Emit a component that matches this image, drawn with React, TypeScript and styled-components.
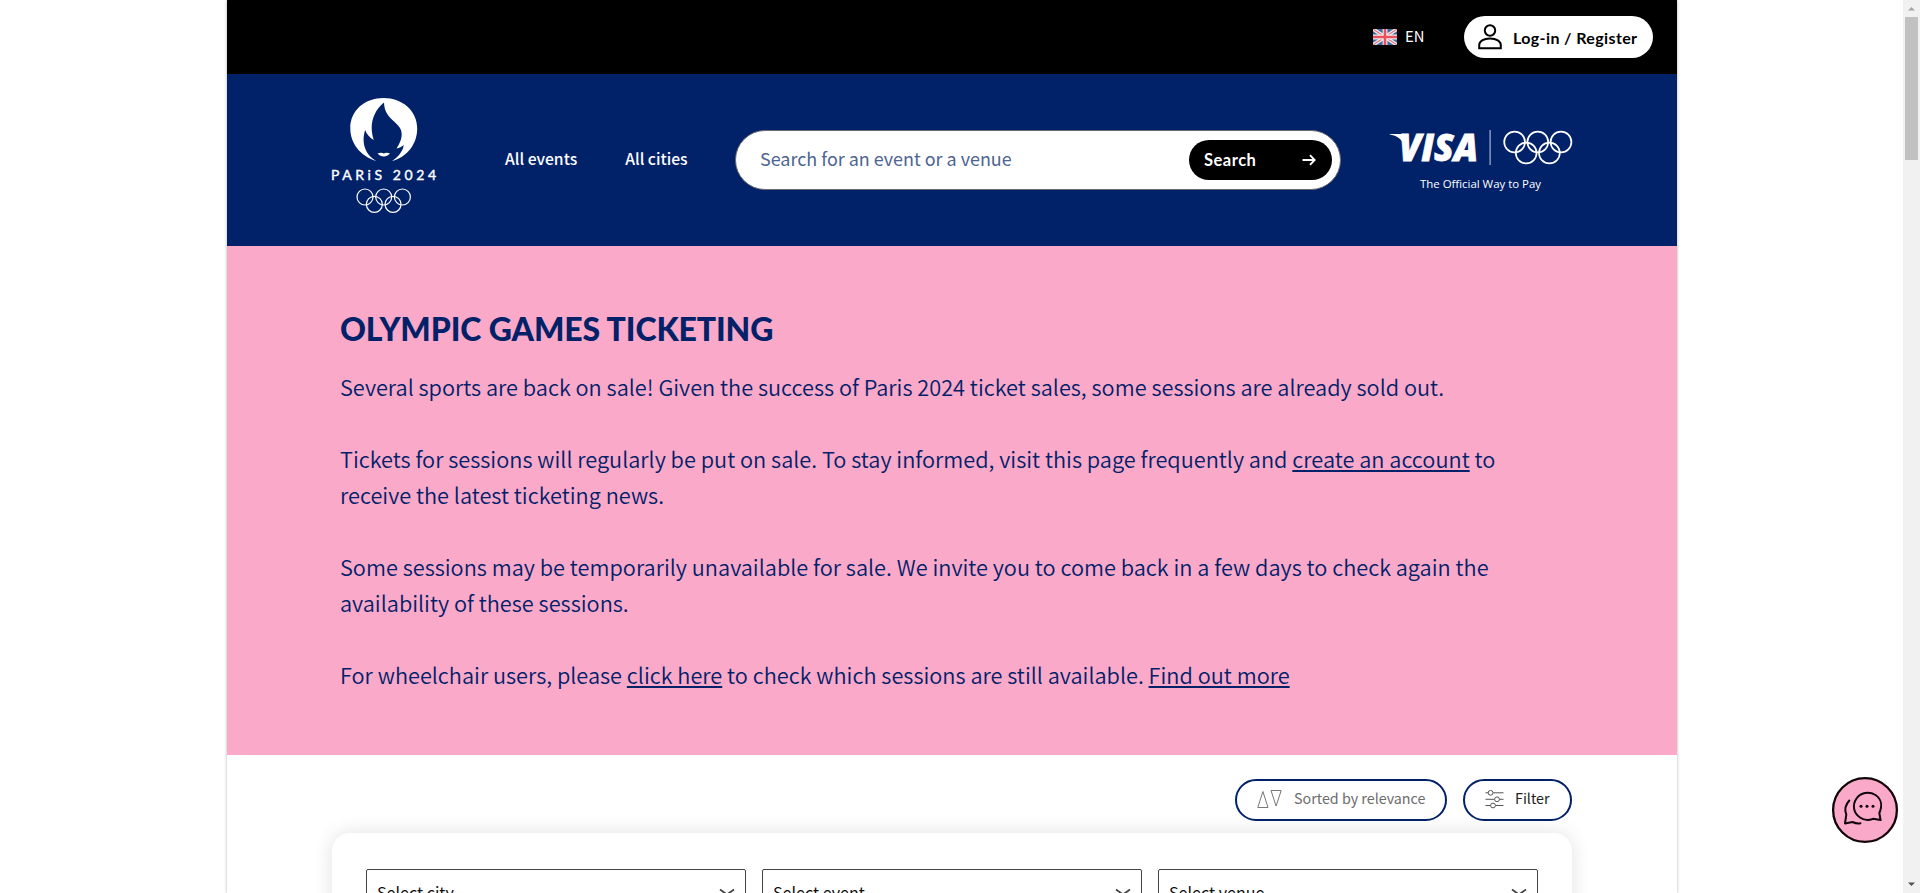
import React from "react";
import styled, { createGlobalStyle } from "styled-components";

const NAVY = "#012169";
const PINK = "#faa9c9";
const SANS = '"Noto Sans CJK JP", "Noto Sans", sans-serif';
const DISPLAY = 'Lato, "Open Sans", sans-serif';

const GlobalStyle = createGlobalStyle`
  * { box-sizing: border-box; }
  html, body { margin: 0; padding: 0; height: 893px; overflow: hidden; background: #fff; }
  body { font-family: ${SANS}; color: #000; }
  a { color: inherit; }
  svg { display: block; flex: none; overflow: visible; }
`;

const Viewport = styled.div`
  display: flex;
  width: 1920px;
  height: 893px;
  overflow: hidden;
`;

const Stage = styled.div`
  flex: 1;
  padding-left: 227px;
`;

const Page = styled.div`
  width: 1450px;
  height: 893px;
  overflow: hidden;
  background: #fff;
  box-shadow: 0 0 3px rgba(0, 0, 0, 0.3);
`;

const TopBar = styled.div`
  display: flex;
  justify-content: flex-end;
  align-items: center;
  height: 74px;
  padding-right: 24px;
  background: #000;
`;

const Language = styled.button`
  display: flex;
  align-items: center;
  gap: 8px;
  width: 91px;
  padding: 0;
  border: 0;
  background: none;
  color: #fff;
  font: 400 14.8px/20px ${SANS};
`;

const LanguageCode = styled.span`
  padding-bottom: 2px;
`;

const LoginButton = styled.button`
  display: flex;
  align-items: center;
  width: 189px;
  height: 42px;
  padding: 0 0 0 13px;
  gap: 10px;
  border: 0;
  border-radius: 21px;
  background: #fff;
  color: #000;
  font: 700 16px/20px ${DISPLAY};
  letter-spacing: 0.38px;
  white-space: nowrap;
`;

const LoginLabel = styled.span`
  padding-top: 2px;
`;

const Header = styled.header`
  display: flex;
  align-items: center;
  height: 172px;
  padding-left: 103px;
  background: ${NAVY};
`;

const Brand = styled.div`
  padding-bottom: 8px;
`;

const Nav = styled.nav`
  display: flex;
  width: 230px;
  margin-left: 67px;
  padding-bottom: 3px;
  gap: 48px;
`;

const NavLink = styled.a`
  color: #fff;
  font: 500 15.7px/24px ${SANS};
  text-decoration: none;
  white-space: nowrap;
`;

const SearchBox = styled.form`
  display: flex;
  align-items: center;
  justify-content: space-between;
  width: 606px;
  height: 60px;
  padding: 0 8px 0 24px;
  border: 1px solid #6b6b6b;
  border-radius: 30px;
  background: #fff;
`;

const Placeholder = styled.span`
  padding-bottom: 4px;
  color: #4d6491;
  font: 400 17.95px/26px ${SANS};
  white-space: nowrap;
`;

const SearchButton = styled.button`
  display: flex;
  align-items: center;
  justify-content: space-between;
  width: 143px;
  height: 40px;
  padding: 0 16px 0 15px;
  border: 0;
  border-radius: 20px;
  background: #000;
  color: #fff;
  font: 700 16.5px/20px ${DISPLAY};
  letter-spacing: 0.5px;
`;

const Partner = styled.div`
  margin-left: 48px;
  padding-bottom: 1px;
`;

const Hero = styled.section`
  height: 509px;
  padding: 64px 113px 0;
  background: ${PINK};
  color: ${NAVY};
`;

const Title = styled.h1`
  margin: 0;
  font: 900 32px/37px ${DISPLAY};
  letter-spacing: -0.1px;
  white-space: nowrap;
`;

const Paragraph = styled.p`
  margin: 0 0 36px;
  font: 350 21.73px/36px ${SANS};
  white-space: nowrap;
`;

const Copy = styled.div`
  padding-top: 22px;
`;

const TextLink = styled.a`
  text-decoration: underline;
  text-decoration-thickness: 2px;
  text-underline-offset: 2px;
  text-decoration-skip-ink: none;
`;

const Actions = styled.div`
  display: flex;
  justify-content: flex-end;
  gap: 16px;
  padding: 24px 105px 12px 0;
`;

const PillButton = styled.button<{ $width: number; $gap: number; $muted?: boolean }>`
  display: flex;
  align-items: center;
  gap: ${(p) => p.$gap}px;
  width: ${(p) => p.$width}px;
  height: 42px;
  padding: 0 0 2px 20px;
  border: 2px solid ${NAVY};
  border-radius: 21px;
  background: #fff;
  color: ${(p) => (p.$muted ? "#6c6c6c" : "#222")};
  font: 400 14.3px/20px ${SANS};
  white-space: nowrap;
`;

const PillLabel = styled.span`
  padding-bottom: 2px;
`;

const FilterCard = styled.section`
  display: flex;
  gap: 16px;
  width: 1240px;
  height: 200px;
  margin-left: 105px;
  padding: 36px 34px;
  border-radius: 18px;
  background: #fff;
  box-shadow: 0 0 20px rgba(0, 0, 0, 0.12);
`;

const Select = styled.div`
  display: flex;
  align-items: center;
  justify-content: space-between;
  flex: 1;
  height: 45px;
  padding: 0 10px;
  border: 1px solid #444;
  border-radius: 2px;
  font: 400 16.1px/24px ${SANS};
  color: #111;
`;

const ScrollTrack = styled.div`
  display: flex;
  flex-direction: column;
  align-items: center;
  width: 17px;
  height: 893px;
  background: #f1f1f1;
`;

const ScrollThumb = styled.div`
  width: 13px;
  height: 143px;
  margin-bottom: auto;
  background: #c1c1c1;
`;

const ChatButton = styled.button`
  position: fixed;
  right: 22px;
  bottom: 50px;
  width: 66px;
  height: 66px;
  padding: 0;
  border: 0;
  background: none;
`;

type RingsProps = { cx: number; cy: number; r: number; dx: number; dy: number; w: number };

const Rings = ({ cx, cy, r, dx, dy, w }: RingsProps) => (
  <g fill="none" stroke="#fff" strokeWidth={w}>
    <circle cx={cx - dx} cy={cy} r={r} />
    <circle cx={cx} cy={cy} r={r} />
    <circle cx={cx + dx} cy={cy} r={r} />
    <circle cx={cx - dx / 2} cy={cy + dy} r={r} />
    <circle cx={cx + dx / 2} cy={cy + dy} r={r} />
  </g>
);

const ParisLogo = () => (
  <svg width="108" height="120" viewBox="0 0 108 120">
    <path
      fill="#fff"
      d="M46.3 65 C30 60 20.3 47 20.3 32.5 C20.3 14 35 2 53.7 2 C72 2 87.2 14.5 87.2 32.5 C87.2 47 78 61 62 65 C68 61 73 55.5 73.7 49 C71.5 51 69.5 52 66.5 52.5 C71.5 45 73 38.5 70.5 33 C67 25 54.5 22.5 54 6.5 C46 13 41.7 22 41.7 32 C41.7 36 42.5 40 43.7 44 C39.5 41.5 36.5 38 35.2 34 C31.5 45 34 58 46.3 65 Z"
    />
    <path fill="#fff" d="M47.5 57.5 C50 56.5 52.3 56.6 53.8 57.4 C55.3 56.6 57.7 56.5 60 57.5 C56.5 61.5 51 61.5 47.5 57.5 Z" />
    <text
      x="1"
      y="84"
      textLength="105"
      lengthAdjust="spacing"
      fill="#fff"
      stroke="#fff"
      strokeWidth="0.4"
      fontFamily={DISPLAY}
      fontSize="14"
      fontWeight="400"
    >
      PARiS 2024
    </text>
    <Rings cx={53.7} cy={101} r={8} dx={18.7} dy={7.3} w={1.2} />
  </svg>
);

const VisaLogo = () => (
  <svg width="190" height="66" viewBox="0 0 190 66">
    <path fill="#fff" d="M0.8 7 H15.5 L18 13 L14 16 C11 11 7 8.5 0.8 7.6 Z" />
    <text
      x="10"
      y="34"
      textLength="79"
      lengthAdjust="spacingAndGlyphs"
      fill="#fff"
      stroke="#fff"
      strokeWidth="0.8"
      fontFamily='"Open Sans", sans-serif'
      fontStyle="italic"
      fontWeight="800"
      fontSize="37"
    >
      VISA
    </text>
    <rect x="100.5" y="3" width="1.2" height="35" fill="#aab6d2" />
    <Rings cx={148.8} cy={15} r={10.4} dx={23.2} dy={11} w={1.7} />
    <text
      x="31"
      y="61"
      textLength="121"
      lengthAdjust="spacingAndGlyphs"
      fill="#fff"
      fontFamily='"Open Sans", sans-serif'
      fontSize="11.5"
    >
      The Official Way to Pay
    </text>
  </svg>
);

const Flag = () => (
  <svg width="24" height="16" viewBox="0 0 24 16">
    <defs>
      <clipPath id="flag-bounds">
        <rect width="24" height="16" />
      </clipPath>
    </defs>
    <g clipPath="url(#flag-bounds)">
      <rect width="24" height="16" fill="#3f6a9c" />
      <path d="M0 0 L24 16 M24 0 L0 16" stroke="#f3eef0" strokeWidth="3.6" />
      <path d="M0 0 L24 16 M24 0 L0 16" stroke="#e0707c" strokeWidth="1.1" />
      <path d="M12 0 V16 M0 8 H24" stroke="#f3eef0" strokeWidth="4.8" />
      <path d="M12 0 V16 M0 8 H24" stroke="#e8505c" strokeWidth="2.6" />
    </g>
  </svg>
);

const UserIcon = () => (
  <svg width="26" height="28" viewBox="0 0 26 28" fill="none" stroke="#000" strokeWidth="2">
    <circle cx="13" cy="7.5" r="5.2" />
    <path d="M2.2 25.3 V22 C2.2 18.3 6.5 15.5 13 15.5 C19.5 15.5 23.8 18.3 23.8 22 V25.3 Z" />
  </svg>
);

const ArrowIcon = () => (
  <svg width="14" height="12" viewBox="0 0 14 12" fill="none" stroke="#fff" strokeWidth="1.8">
    <path d="M0.5 6 H12.5 M8 1.2 L12.7 6 L8 10.8" />
  </svg>
);

const SortIcon = () => (
  <svg width="25" height="20" viewBox="0 0 25 20" fill="none" stroke="#777" strokeWidth="1">
    <path d="M0.8 18.5 H11 L5.9 2.5 Z M14 1.5 H24.2 L19.1 17 Z" />
  </svg>
);

const SlidersIcon = () => (
  <svg width="20" height="20" viewBox="0 0 20 20" fill="none" stroke="#555" strokeWidth="1">
    <path d="M0.5 3.8 H3.1 M8.1 3.8 H18.5 M0.5 10.3 H9.5 M14.5 10.3 H18.5 M0.5 16.5 H5.5 M10.5 16.5 H18.5" />
    <circle cx="5.6" cy="3.8" r="2.4" />
    <circle cx="12" cy="10.3" r="2.4" />
    <circle cx="8" cy="16.5" r="2.4" />
  </svg>
);

const Chevron = () => (
  <svg width="16" height="10" viewBox="0 0 16 10" fill="none" stroke="#444" strokeWidth="1.8">
    <path d="M1 2.5 L8 7.5 L15 2.5" />
  </svg>
);

const ChatIcon = () => (
  <svg
    width="66"
    height="66"
    viewBox="0 0 66 66"
    fill="none"
    stroke="#120509"
    strokeWidth="2"
    strokeLinecap="round"
    strokeLinejoin="round"
  >
    <circle cx="33" cy="33" r="31.9" fill={PINK} strokeWidth="2.3" />
    <path d="M48.6 43 L47.3 36 C50.5 29 49.5 22 43.5 18 C37 14 28.5 15.5 24.5 21.5 C20 28 21.5 36.5 28 40.5 C32 43.3 37 43.5 41 41.8 Z" />
    <path d="M17.3 23.5 C13.3 28 12.6 33.5 14.3 37.5 L13 46.5 L20.5 45 C23.5 46.5 26 46.8 28.5 46.3" />
    <g fill="#120509" stroke="none">
      <circle cx="29" cy="29.2" r="1.5" />
      <circle cx="35" cy="29.2" r="1.5" />
      <circle cx="41" cy="29.2" r="1.5" />
    </g>
  </svg>
);

const ScrollArrow = ({ down }: { down?: boolean }) => (
  <svg width="17" height="17" viewBox="0 0 17 17">
    <path d={down ? "M5 6.5 H12 L8.5 10 Z" : "M5 10.5 H12 L8.5 7 Z"} fill={down ? "#505050" : "#a3a3a3"} />
  </svg>
);

const selects = ["Select city", "Select event", "Select venue"];

export default function App() {
  return (
    <>
      <GlobalStyle />
      <Viewport>
        <Stage>
          <Page>
            <TopBar>
              <Language>
                <Flag />
                <LanguageCode>EN</LanguageCode>
              </Language>
              <LoginButton>
                <UserIcon />
                <LoginLabel>Log-in / Register</LoginLabel>
              </LoginButton>
            </TopBar>
            <Header>
              <Brand>
                <ParisLogo />
              </Brand>
              <Nav>
                <NavLink>All events</NavLink>
                <NavLink>All cities</NavLink>
              </Nav>
              <SearchBox>
                <Placeholder>Search for an event or a venue</Placeholder>
                <SearchButton type="button">
                  Search
                  <ArrowIcon />
                </SearchButton>
              </SearchBox>
              <Partner>
                <VisaLogo />
              </Partner>
            </Header>
            <Hero>
              <Title>OLYMPIC GAMES TICKETING</Title>
              <Copy>
                <Paragraph>
                  Several sports are back on sale! Given the success of Paris 2024 ticket sales, some sessions are already sold out.
                </Paragraph>
                <Paragraph>
                  Tickets for sessions will regularly be put on sale. To stay informed, visit this page frequently and{" "}
                  <TextLink>create an account</TextLink> to
                  <br />
                  receive the latest ticketing news.
                </Paragraph>
                <Paragraph>
                  Some sessions may be temporarily unavailable for sale. We invite you to come back in a few days to check again the
                  <br />
                  availability of these sessions.
                </Paragraph>
                <Paragraph>
                  For wheelchair users, please <TextLink>click here</TextLink> to check which sessions are still available.{" "}
                  <TextLink>Find out more</TextLink>
                </Paragraph>
              </Copy>
            </Hero>
            <Actions>
              <PillButton $width={212} $gap={12} $muted>
                <SortIcon />
                <PillLabel>Sorted by relevance</PillLabel>
              </PillButton>
              <PillButton $width={109} $gap={10}>
                <SlidersIcon />
                <PillLabel>Filter</PillLabel>
              </PillButton>
            </Actions>
            <FilterCard>
              {selects.map((label) => (
                <Select key={label}>
                  {label}
                  <Chevron />
                </Select>
              ))}
            </FilterCard>
          </Page>
        </Stage>
        <ScrollTrack>
          <ScrollArrow />
          <ScrollThumb />
          <ScrollArrow down />
        </ScrollTrack>
      </Viewport>
      <ChatButton aria-label="Chat">
        <ChatIcon />
      </ChatButton>
    </>
  );
}
